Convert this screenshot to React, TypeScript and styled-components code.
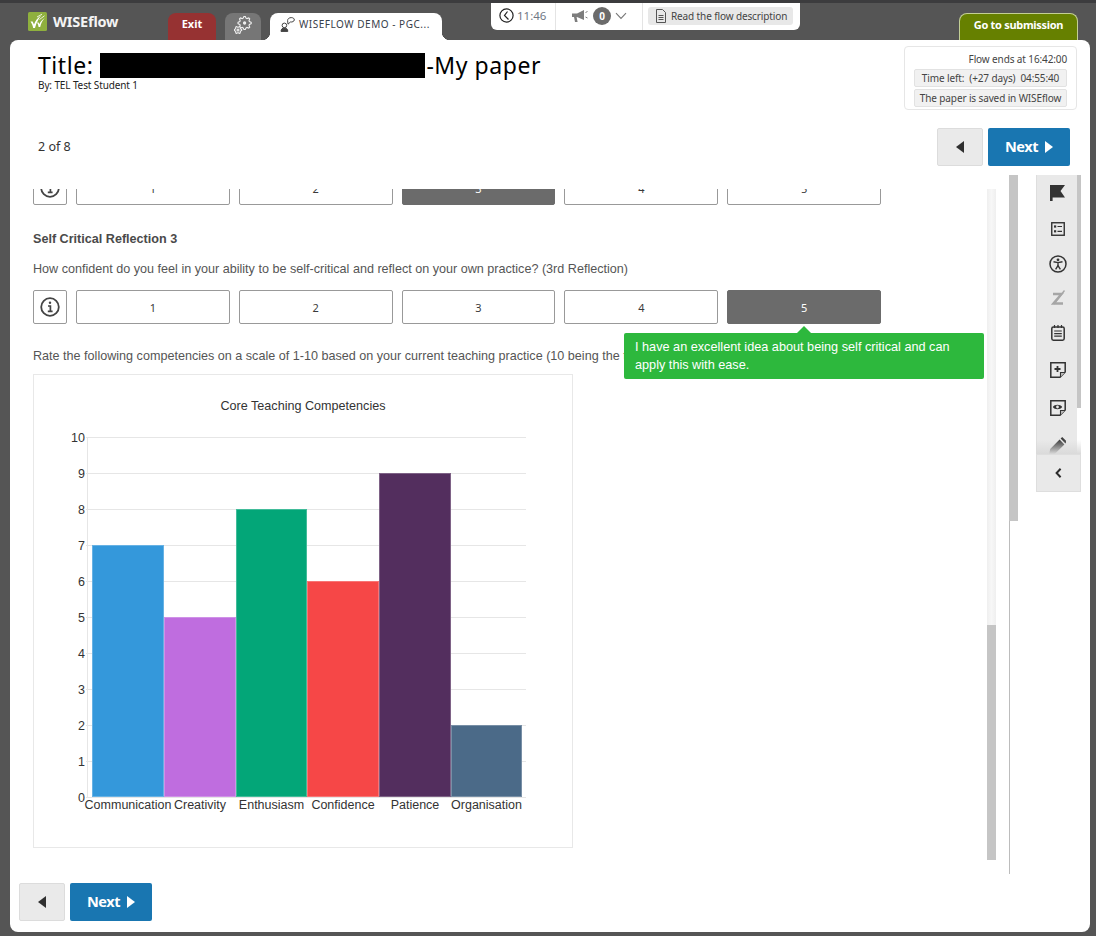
import React from "react";
import styled, { createGlobalStyle } from "styled-components";

const UI_FONT = `"Noto Sans", "Open Sans", sans-serif`;
const BODY_FONT = `"Liberation Sans", Arial, sans-serif`;

const Global = createGlobalStyle`
  html, body { margin: 0; padding: 0; background: #555555; }
  * { box-sizing: border-box; }
`;

const Page = styled.div`
  width: 1096px;
  height: 936px;
  overflow: hidden;
  background: #555555;
  border-top: 3px solid #3c3c3e;
  display: flex;
  flex-direction: column;
  font-family: ${UI_FONT};
`;

const Header = styled.header`
  height: 37px;
  flex: none;
  display: flex;
  align-items: flex-end;
  padding: 0 18px 0 28px;
`;

const Brand = styled.div`
  align-self: flex-start;
  margin-top: 9px;
  width: 140px;
  display: flex;
  align-items: center;
  gap: 6px;
  color: #f4f4f4;
  font-size: 14.5px;
  font-weight: 700;
  letter-spacing: -0.2px;
  line-height: 19px;
`;

const Tab = styled.div<{ $w: number; $bg: string; $lift: number }>`
  width: ${(p) => p.$w}px;
  height: 27px;
  flex: none;
  margin-right: 9px;
  background: ${(p) => p.$bg};
  border-radius: 8px 8px 0 0;
  display: flex;
  align-items: center;
  justify-content: center;
  color: #fff;
  font-size: 11px;
  font-weight: 700;
  padding-bottom: ${(p) => p.$lift}px;
`;

const ActiveTab = styled.div`
  position: relative;
  width: 172px;
  height: 27px;
  flex: none;
  background: #fff;
  border-radius: 8px 8px 0 0;
  display: flex;
  align-items: center;
  gap: 4px;
  padding: 0 0 5px 10px;
  color: #38404a;
  font-size: 10px;
  letter-spacing: 0.52px;
  white-space: nowrap;
  &::before,
  &::after {
    content: "";
    position: absolute;
    bottom: 0;
    width: 8px;
    height: 8px;
  }
  &::before {
    left: -8px;
    background: radial-gradient(circle at 0 0, transparent 8px, #fff 8.5px);
  }
  &::after {
    right: -8px;
    background: radial-gradient(circle at 100% 0, transparent 8px, #fff 8.5px);
  }
`;

const InfoBar = styled.div`
  align-self: flex-start;
  width: 309px;
  height: 27px;
  margin-left: 49px;
  background: #fff;
  border-radius: 0 0 6px 6px;
  display: flex;
  align-items: center;
`;

const BarCell = styled.div<{ $w: number; $line?: boolean }>`
  width: ${(p) => p.$w}px;
  height: 100%;
  flex: none;
  display: flex;
  align-items: center;
  padding-left: 8px;
  padding-bottom: 2px;
  gap: 3px;
  border-right: ${(p) => (p.$line ? "1px solid #e4e4e4" : "none")};
`;

const MegaCell = styled(BarCell)`
  padding-left: 16px;
`;

const Clock = styled.span`
  font-size: 11.5px;
  color: #6f7785;
`;

const Badge = styled.span`
  width: 18px;
  height: 18px;
  margin: 0 1px 0 2px;
  border-radius: 50%;
  background: #6b6b6b;
  color: #fff;
  font-size: 10px;
  font-weight: 700;
  display: flex;
  align-items: center;
  justify-content: center;
`;

const FlowButton = styled.div`
  width: 145px;
  height: 18px;
  margin: 0 0 2px 5px;
  background: #e8e8e8;
  border-radius: 3px;
  display: flex;
  align-items: center;
  gap: 5px;
  padding-left: 8px;
  font-size: 10px;
  letter-spacing: -0.12px;
  color: #444;
  white-space: nowrap;
`;

const SubmitTab = styled.div`
  margin-left: auto;
  width: 119px;
  height: 27px;
  background: #668000;
  border: 1px solid #c3cf96;
  border-bottom: none;
  border-radius: 8px 8px 0 0;
  color: #fff;
  font-size: 11px;
  font-weight: 700;
  letter-spacing: -0.3px;
  display: flex;
  align-items: center;
  justify-content: center;
  padding-bottom: 5px;
`;

const Card = styled.main`
  width: 1080px;
  height: 892px;
  margin-left: 10px;
  flex: none;
  background: #fff;
  border-radius: 8px;
  display: flex;
  flex-direction: column;
`;

const TitleRow = styled.div`
  height: 88px;
  flex: none;
  display: flex;
  justify-content: space-between;
  padding: 6px 13px 0 28px;
`;

const TitleBlock = styled.div`
  padding-top: 6px;
`;

const TitleLine = styled.h1`
  margin: 0;
  height: 26px;
  display: flex;
  align-items: center;
  color: #000;
  font-size: 23px;
  line-height: 26px;
  font-weight: 400;
  letter-spacing: 0.55px;
  white-space: nowrap;
`;

const Redacted = styled.span`
  width: 325px;
  height: 25px;
  margin: 0 1px 0 7px;
  background: #000;
`;

const Byline = styled.div`
  margin-top: 0;
  font-size: 10px;
  line-height: 14px;
  letter-spacing: -0.12px;
  color: #222;
`;

const StatusBox = styled.div`
  width: 173px;
  height: 64px;
  border: 1px solid #e6e6e6;
  border-radius: 4px;
  padding: 6px 9px 0;
  display: flex;
  flex-direction: column;
  gap: 2px;
  font-size: 10px;
  color: #444;
  letter-spacing: -0.12px;
  white-space: nowrap;
`;

const StatusText = styled.div`
  height: 13px;
  margin-bottom: 1px;
  line-height: 13px;
  text-align: right;
`;

const StatusPill = styled.div`
  height: 18px;
  background: #f1f1f1;
  border: 1px solid #e2e2e2;
  border-radius: 2px;
  display: flex;
  align-items: center;
  justify-content: center;
  padding-bottom: 1px;
`;

const NavRow = styled.div`
  height: 38px;
  flex: none;
  display: flex;
  align-items: center;
  padding: 0 20px 0 28px;
`;

const PageCount = styled.div`
  margin-right: auto;
  margin-bottom: 2px;
  color: #333;
  font-size: 12.5px;
`;

const BackButton = styled.button`
  width: 46px;
  height: 38px;
  margin-right: 5px;
  padding: 0;
  background: #eaeaea;
  border: 1px solid #dcdcdc;
  border-radius: 2px;
  display: flex;
  align-items: center;
  justify-content: center;
`;

const NextLabel = styled.span`
  margin-top: -3px;
  letter-spacing: -0.45px;
`;

const NextButton = styled.button`
  width: 82px;
  height: 38px;
  padding: 0;
  background: #1976b1;
  border: none;
  border-radius: 2px;
  color: #fff;
  font-family: ${UI_FONT};
  font-size: 14.5px;
  font-weight: 700;
  display: flex;
  align-items: center;
  justify-content: center;
  gap: 7px;
`;

const Body = styled.div`
  height: 699px;
  margin-top: 9px;
  flex: none;
  display: flex;
  align-items: flex-start;
`;

const LeftPane = styled.div`
  width: 986px;
  height: 671px;
  margin-top: 14px;
  flex: none;
  display: flex;
`;

const Scroller = styled.div`
  flex: 1;
  overflow: hidden;
  padding-left: 23px;
`;

const Scrolled = styled.div`
  margin-top: -18px;
  font-family: ${BODY_FONT};
`;

const ScrollTrack = styled.div<{ $offset: number; $thumb: number }>`
  width: 9px;
  height: 100%;
  flex: none;
  background: linear-gradient(90deg, #efefef, #f7f7f7 50%, #efefef);
  padding-top: ${(p) => p.$offset}px;
  &::after {
    content: "";
    display: block;
    height: ${(p) => p.$thumb}px;
    background: #c5c5c5;
  }
`;

const OuterScroll = styled.div`
  width: 9px;
  height: 699px;
  margin-left: 13px;
  flex: none;
  background: #fff;
  border-left: 1px solid #bcbcbc;
  margin-right: 18px;
  &::before {
    content: "";
    display: block;
    margin-left: -1px;
    width: 9px;
    height: 346px;
    background: #c5c5c5;
  }
`;

const Tools = styled.aside`
  width: 45px;
  flex: none;
  display: flex;
  flex-direction: column;
`;

const ToolViewport = styled.div`
  position: relative;
  height: 279px;
  overflow: hidden;
  display: flex;
  &::after {
    content: "";
    position: absolute;
    left: 0;
    right: 0;
    bottom: 0;
    height: 14px;
    background: linear-gradient(rgba(232, 232, 232, 0), #dadada);
  }
`;

const ToolList = styled.div`
  width: 41px;
  flex: none;
  background: #e9e9e9;
  border-left: 1px solid #dedede;
`;

const ToolScroll = styled.div`
  width: 4px;
  flex: none;
  background: #fff;
  &::before {
    content: "";
    display: block;
    height: 233px;
    background: #c5c5c5;
  }
`;

const ToolItem = styled.div<{ $h: number }>`
  height: ${(p) => p.$h}px;
  display: flex;
  align-items: center;
  justify-content: center;
  padding-left: 1px;
`;

const Collapse = styled.button`
  height: 38px;
  padding: 0;
  background: #e9e9e9;
  border: 1px solid #dedede;
  display: flex;
  align-items: center;
  justify-content: center;
`;

const RatingRow = styled.div`
  position: relative;
  width: 848px;
  height: 34px;
  display: grid;
  grid-template-columns: 34px repeat(5, 1fr);
  column-gap: 9px;
`;

const InfoButton = styled.div`
  border: 1px solid #999;
  border-radius: 2px;
  display: flex;
  align-items: center;
  justify-content: center;
  background: #fff;
`;

const Rating = styled.div<{ $on?: boolean }>`
  border: 1px solid ${(p) => (p.$on ? "#6b6b6b" : "#999")};
  border-radius: 2px;
  background: ${(p) => (p.$on ? "#6b6b6b" : "#fff")};
  color: ${(p) => (p.$on ? "#fff" : "#3a3a3a")};
  font-family: ${UI_FONT};
  font-size: 11px;
  display: flex;
  align-items: center;
  justify-content: center;
`;

const Heading = styled.div`
  margin-top: 26px;
  font-size: 12.6px;
  line-height: 16px;
  font-weight: 700;
  color: #4a4a4a;
`;

const Para = styled.p<{ $top: number }>`
  margin: ${(p) => p.$top}px 0 0;
  font-size: 12.6px;
  line-height: 16px;
  color: #555;
  white-space: nowrap;
`;

const Tooltip = styled.div`
  position: absolute;
  left: 591px;
  top: 43px;
  width: 360px;
  height: 46px;
  z-index: 2;
  background: #2db83d;
  border-radius: 2px;
  padding: 5px 11px;
  color: #fff;
  font-family: ${BODY_FONT};
  font-size: 12.7px;
  line-height: 18px;
  &::before {
    content: "";
    position: absolute;
    left: 173px;
    top: -7px;
    border-left: 7px solid transparent;
    border-right: 7px solid transparent;
    border-bottom: 7px solid #2db83d;
  }
`;

const Row2 = styled.div`
  margin-top: 13px;
`;

const ChartCard = styled.figure`
  width: 540px;
  height: 474px;
  margin: 10px 0 0;
  border: 1px solid #e8e8e8;
`;

const Footer = styled.div`
  flex: 1;
  display: flex;
  padding: 9px 0 0 9px;
`;

const BRAND = "#333333";

const Logo = () => (
  <svg width="19" height="19" viewBox="0 0 19 19" aria-hidden>
    <rect width="19" height="19" rx="1.5" fill="#8fb03e" />
    <path d="M2.5 9.5 L4.6 9.5 L6 12.5 C7.2 9 9.5 5.8 13.5 3 C11 6 8.6 10 7 16 L5.2 16 C4.8 13.5 3.8 11.3 2.5 9.5Z" fill="#fff" />
    <path d="M9 10.5 L10.6 10.5 L11.3 12.3 C12.3 10 14 7.8 16.8 6 C14.8 8.3 13 11 12.2 15 L10.6 15 C10.4 13.2 9.8 11.7 9 10.5Z" fill="#fff" />
    <path d="M9 5 L14 2.2 M11.5 7.5 L16.5 3.8" stroke="#fff" strokeWidth=".8" />
  </svg>
);

const gearPath = (cx: number, cy: number, r: number, teeth: number) => {
  const pts: string[] = [];
  const n = teeth * 4;
  for (let i = 0; i < n; i++) {
    const a = (i / n) * Math.PI * 2 - Math.PI / n;
    const rad = i % 4 < 2 ? r : r * 0.76;
    pts.push(`${(cx + rad * Math.cos(a)).toFixed(2)} ${(cy + rad * Math.sin(a)).toFixed(2)}`);
  }
  return `M${pts.join("L")}Z`;
};

const Gears = () => (
  <svg width="18" height="18" viewBox="0 0 18 18" fill="none" stroke="#f2f2f2" strokeWidth="1.1" aria-hidden>
    <path d={gearPath(10.6, 7, 6.6, 8)} />
    <circle cx="10.6" cy="7" r="1.1" fill="#f2f2f2" />
    <path d={gearPath(4, 14, 3.7, 6)} fill="#767676" />
    <circle cx="4" cy="14" r="1" />
  </svg>
);

const TabIcon = () => (
  <svg width="15" height="15" viewBox="0 0 15 15" fill="none" stroke="#444" strokeWidth="1" aria-hidden>
    <path d="M7.6 3.6 C7.6 1.8 9.2 .6 11.2 .6 C13.2 .6 14.5 1.6 14.3 3 C14 4.5 12.4 5.2 10.4 5 L8 7.2Z" />
    <circle cx="4.4" cy="8.4" r="2.3" />
    <path d="M1 14.4 C1 12.2 2.4 11 4.4 11 C6.4 11 7.8 12.2 7.8 14.4Z" fill="#444" />
  </svg>
);

const ClockIcon = () => (
  <svg width="15" height="15" viewBox="0 0 15 15" fill="none" stroke="#222" strokeWidth="1.2" aria-hidden>
    <circle cx="7.5" cy="7.5" r="6.6" />
    <path d="M8.5 3.5 L5.5 7.5 L9.5 11.5" />
  </svg>
);

const Megaphone = () => (
  <svg width="16" height="14" viewBox="0 0 16 14" aria-hidden>
    <path d="M0 4.5 H5 L12 1 V11 L5 8 H4.6 L5.6 13 H3 L2 8 H0Z" fill="#7d7d7d" />
    <path d="M13.5 3.5 L15.5 2.5 M13.5 8 L15.5 9" stroke="#7d7d7d" strokeWidth="1" />
  </svg>
);

const ChevronDown = () => (
  <svg width="12" height="8" viewBox="0 0 12 8" fill="none" stroke="#777" strokeWidth="1.1" aria-hidden>
    <path d="M1 1.2 L6 6.4 L11 1.2" />
  </svg>
);

const DocIcon = () => (
  <svg width="10" height="14" viewBox="0 0 10 14" fill="none" stroke="#555" strokeWidth="1" aria-hidden>
    <path d="M.5 .5 H6.5 L9.5 3.5 V13.5 H.5Z" />
    <path d="M2.5 6.5 H7.5 M2.5 8.5 H7.5 M2.5 10.5 H7.5" />
  </svg>
);

const TriLeft = () => (
  <svg width="8" height="12" viewBox="0 0 8 12" aria-hidden>
    <path d="M8 0 V12 L0 6Z" fill="#2f2f2f" />
  </svg>
);

const TriRight = () => (
  <svg width="8" height="12" viewBox="0 0 8 12" aria-hidden>
    <path d="M0 0 V12 L8 6Z" fill="#fff" />
  </svg>
);

const InfoIcon = () => (
  <svg width="20" height="20" viewBox="0 0 20 20" fill="none" stroke="#444" aria-hidden>
    <circle cx="10" cy="10" r="8.8" strokeWidth="1.8" />
    <circle cx="10" cy="5.8" r="1.2" fill="#444" stroke="none" />
    <path d="M8 9 H10.4 V14 M7.8 14.4 H12.6" strokeWidth="1.7" />
  </svg>
);

const FlagIcon = () => (
  <svg width="15" height="16" viewBox="0 0 15 16" aria-hidden>
    <path d="M0 0 H15 L10.5 6 L15 12.5 H2.6 V16 H0Z" fill={BRAND} />
  </svg>
);

const ListIcon = () => (
  <svg width="14" height="14" viewBox="0 0 14 14" fill="none" stroke={BRAND} aria-hidden>
    <rect x=".75" y=".75" width="12.5" height="12.5" strokeWidth="1.4" />
    <rect x="3" y="3.4" width="2.2" height="2.2" fill={BRAND} stroke="none" />
    <rect x="3" y="8.2" width="2.2" height="2.2" fill={BRAND} stroke="none" />
    <path d="M6.5 4.5 H11 M6.5 9.3 H11" strokeWidth="1.2" />
  </svg>
);

const AccessIcon = () => (
  <svg width="18" height="18" viewBox="0 0 18 18" fill="none" stroke={BRAND} aria-hidden>
    <circle cx="9" cy="9" r="8" strokeWidth="1.5" />
    <circle cx="9" cy="4.8" r="1.4" fill={BRAND} stroke="none" />
    <path d="M4.5 6.8 L9 7.6 L13.5 6.8 M9 7.6 V10.6 M9 10.6 L6.6 14.4 M9 10.6 L11.4 14.4" strokeWidth="1.4" />
  </svg>
);

const StrikeZ = () => (
  <svg width="14" height="16" viewBox="0 0 14 16" fill="none" stroke="#a6a6a6" aria-hidden>
    <path d="M2 4 H10.5 L2.5 13.5 H12" strokeWidth="2.4" />
    <path d="M13.5 .5 L3 14" strokeWidth="1.4" />
  </svg>
);

const NotepadIcon = () => (
  <svg width="14" height="16" viewBox="0 0 14 16" fill="none" stroke={BRAND} aria-hidden>
    <rect x=".8" y="2" width="12.4" height="13.2" rx="1.6" strokeWidth="1.5" />
    <path d="M3.5 0 V3 M7 0 V3 M10.5 0 V3" strokeWidth="1.2" />
    <path d="M3.2 6 H10.8 M3.2 8.6 H10.8 M3.2 11.2 H10.8" strokeWidth="1.2" />
  </svg>
);

const NoteBase = ({ children }: { children: React.ReactNode }) => (
  <svg width="16" height="16" viewBox="0 0 16 16" fill="none" stroke={BRAND} aria-hidden>
    <path d="M.8 .8 H15.2 V10 L10 15.2 H.8Z" strokeWidth="1.5" />
    <path d="M15 10.5 H10.5 V15" strokeWidth="1.1" fill="#bdbdbd" />
    {children}
  </svg>
);

const NotePlus = () => (
  <NoteBase>
    <path d="M7.5 4 V10 M4.5 7 H10.5" strokeWidth="1.8" />
  </NoteBase>
);

const NoteEye = () => (
  <NoteBase>
    <path d="M2.8 7 C4.5 4 10.4 4 12.2 7 C10.4 10 4.5 10 2.8 7Z" fill={BRAND} stroke="none" />
    <circle cx="7.5" cy="7" r="1.4" fill="#e9e9e9" stroke="none" />
  </NoteBase>
);

const Pencil = () => (
  <svg width="17" height="18" viewBox="0 0 17 18" aria-hidden>
    <path d="M0 18 L1.2 12 L10.6 2.6 L15.4 7.4 L6 16.8Z M11.6 1.6 L13.2 0 L18 4.8 L16.4 6.4Z" fill="#404040" />
  </svg>
);

const ChevronLeft = () => (
  <svg width="7" height="10" viewBox="0 0 7 10" fill="none" stroke="#2c2c2c" strokeWidth="2" aria-hidden>
    <path d="M5.6 .8 L1.6 5 L5.6 9.2" />
  </svg>
);

const bars = [
  { label: "Communication", value: 7, color: "#3498db", x0: 92, x1: 164 },
  { label: "Creativity", value: 5, color: "#bf6ddf", x0: 164, x1: 236 },
  { label: "Enthusiasm", value: 8, color: "#03a678", x0: 236, x1: 307 },
  { label: "Confidence", value: 6, color: "#f64747", x0: 307, x1: 379 },
  { label: "Patience", value: 9, color: "#532e5e", x0: 379, x1: 451 },
  { label: "Organisation", value: 2, color: "#4b6a88", x0: 451, x1: 522 },
];

const CHART_LEFT = 33;
const CHART_TOP = 374;
const yOf = (v: number) => 797 - v * 36 - CHART_TOP;

const Chart = () => (
  <svg
    width="538"
    height="472"
    viewBox={`1 1 538 472`}
    fontFamily={BODY_FONT}
    role="img"
    aria-label="Core Teaching Competencies"
  >
    <text x="270" y="36" textAnchor="middle" fontSize="12.6" fill="#333">
      Core Teaching Competencies
    </text>
    {Array.from({ length: 11 }, (_, v) => (
      <g key={v}>
        <line x1={53} x2={493} y1={yOf(v) + 0.5} y2={yOf(v) + 0.5} stroke="#e6e6e6" />
        <text x={52} y={yOf(v) + 5} textAnchor="end" fontSize="12.5" fill="#333">
          {v}
        </text>
      </g>
    ))}
    <line x1={54.5} x2={54.5} y1={yOf(10)} y2={yOf(0)} stroke="#e6e6e6" />
    {bars.map((b) => (
      <g key={b.label}>
        <rect
          x={b.x0 - CHART_LEFT}
          y={yOf(b.value)}
          width={b.x1 - b.x0}
          height={b.value * 36}
          fill={b.color}
        />
        <rect
          x={b.x0 - CHART_LEFT + 0.5}
          y={yOf(b.value) + 0.5}
          width={b.x1 - b.x0 - 1}
          height={b.value * 36 - 1}
          fill="none"
          stroke="#fff"
          strokeOpacity="0.25"
        />
        <text x={(b.x0 + b.x1) / 2 - CHART_LEFT} y={434.5} textAnchor="middle" fontSize="12.5" fill="#333">
          {b.label}
        </text>
      </g>
    ))}
  </svg>
);

const Ratings = ({ selected, children }: { selected: number; children?: React.ReactNode }) => (
  <RatingRow>
    <InfoButton>
      <InfoIcon />
    </InfoButton>
    {[1, 2, 3, 4, 5].map((n) => (
      <Rating key={n} $on={n === selected}>
        {n}
      </Rating>
    ))}
    {children}
  </RatingRow>
);

const tools: { h: number; icon: React.ReactNode }[] = [
  { h: 35, icon: <FlagIcon /> },
  { h: 37, icon: <ListIcon /> },
  { h: 33, icon: <AccessIcon /> },
  { h: 35, icon: <StrikeZ /> },
  { h: 36, icon: <NotepadIcon /> },
  { h: 38, icon: <NotePlus /> },
  { h: 38, icon: <NoteEye /> },
  { h: 38, icon: <Pencil /> },
];

export default function App() {
  return (
    <Page>
      <Global />
      <Header>
        <Brand>
          <Logo />
          WISEflow
        </Brand>
        <Tab $w={48} $bg="#963232" $lift={6}>Exit</Tab>
        <Tab $w={36} $bg="#767676" $lift={3}>
          <Gears />
        </Tab>
        <ActiveTab>
          <TabIcon />
          WISEFLOW DEMO - PGC...
        </ActiveTab>
        <InfoBar>
          <BarCell $w={65} $line>
            <ClockIcon />
            <Clock>11:46</Clock>
          </BarCell>
          <MegaCell $w={87} $line>
            <Megaphone />
            <Badge>0</Badge>
            <ChevronDown />
          </MegaCell>
          <FlowButton>
            <DocIcon />
            Read the flow description
          </FlowButton>
        </InfoBar>
        <SubmitTab>Go to submission</SubmitTab>
      </Header>
      <Card>
        <TitleRow>
          <TitleBlock>
            <TitleLine>
              Title:
              <Redacted />
              -My paper
            </TitleLine>
            <Byline>By: TEL Test Student 1</Byline>
          </TitleBlock>
          <StatusBox>
            <StatusText>Flow ends at 16:42:00</StatusText>
            <StatusPill>Time left:&nbsp; (+27 days)&nbsp; 04:55:40</StatusPill>
            <StatusPill>The paper is saved in WISEflow</StatusPill>
          </StatusBox>
        </TitleRow>
        <NavRow>
          <PageCount>2 of 8</PageCount>
          <BackButton aria-label="Previous">
            <TriLeft />
          </BackButton>
          <NextButton>
            <NextLabel>Next</NextLabel>
            <TriRight />
          </NextButton>
        </NavRow>
        <Body>
          <LeftPane>
            <Scroller>
              <Scrolled>
                <Ratings selected={3} />
                <Heading>Self Critical Reflection 3</Heading>
                <Para $top={14}>
                  How confident do you feel in your ability to be self-critical and reflect on your own practice? (3rd Reflection)
                </Para>
                <Row2>
                  <Ratings selected={5}>
                    <Tooltip>I have an excellent idea about being self critical and can apply this with ease.</Tooltip>
                  </Ratings>
                </Row2>
                <Para $top={24}>
                  Rate the following competencies on a scale of 1-10 based on your current teaching practice (10 being the top score)
                </Para>
                <ChartCard>
                  <Chart />
                </ChartCard>
              </Scrolled>
            </Scroller>
            <ScrollTrack $offset={436} $thumb={235} />
          </LeftPane>
          <OuterScroll />
          <Tools>
            <ToolViewport>
              <ToolList>
                {tools.map((t, i) => (
                  <ToolItem key={i} $h={t.h}>
                    {t.icon}
                  </ToolItem>
                ))}
              </ToolList>
              <ToolScroll />
            </ToolViewport>
            <Collapse aria-label="Collapse">
              <ChevronLeft />
            </Collapse>
          </Tools>
        </Body>
        <Footer>
          <BackButton aria-label="Previous">
            <TriLeft />
          </BackButton>
          <NextButton>
            <NextLabel>Next</NextLabel>
            <TriRight />
          </NextButton>
        </Footer>
      </Card>
    </Page>
  );
}
